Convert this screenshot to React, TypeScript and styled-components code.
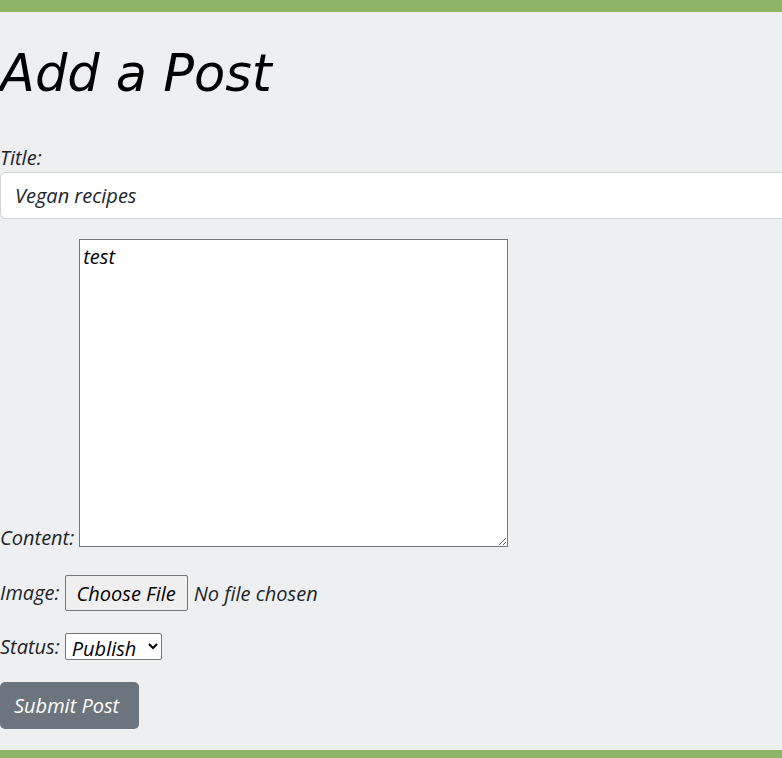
import React from "react";
import styled, { createGlobalStyle } from "styled-components";

const Global = createGlobalStyle`
  html, body { margin: 0; padding: 0; background: #eeeff1; }
  body { font-family: "Open Sans", "Lato", sans-serif; font-style: italic; color: #212529; }
  * { box-sizing: border-box; }
`;

const Bar = styled.div`
  height: 12px;
  background: #8db565;
`;

const BottomBar = styled.div`
  height: 8px;
  background: #8db565;
`;

const Main = styled.main`
  background: #eeeff1;
  padding: 34px 0 20px 0;
  height: 738px;
`;

const Heading = styled.h1`
  margin: 0 0 44px 0;
  font-family: "DejaVu Sans", sans-serif;
  font-style: oblique;
  font-weight: 400;
  font-size: 51px;
  line-height: 56px;
  color: #000;
`;

const Form = styled.form`
  display: flex;
  flex-direction: column;
  font-size: 20px;
`;

const Label = styled.label`
  display: block;
  font-size: 20px;
  line-height: 24px;
  margin-bottom: 2px;
`;

const TextInput = styled.input`
  display: block;
  width: 800px;
  height: 47px;
  padding: 0 14px;
  border: 1px solid #ced4da;
  border-radius: 6px;
  background: #fff;
  font: inherit;
  font-size: 20px;
  color: #212529;
  margin-bottom: 20px;
  outline: none;
`;

const InlineRow = styled.div<{ $bottom?: boolean; $mb: number }>`
  display: flex;
  align-items: ${(p) => (p.$bottom ? "flex-end" : "center")};
  gap: 5px;
  margin-bottom: ${(p) => p.$mb}px;
`;

const RowLabel = styled.label<{ $drop?: number }>`
  font-size: 20px;
  line-height: 24px;
  margin-bottom: ${(p) => -(p.$drop ?? 0)}px;
`;

const ContentArea = styled.textarea`
  width: 429px;
  height: 308px;
  border: 1px solid #767676;
  padding: 5px 3px;
  font: inherit;
  font-size: 20px;
  line-height: 24px;
  color: #000;
  background: #fff;
  resize: both;
  outline: none;
`;

const FileInput = styled.input`
  font: inherit;
  font-size: 20px;
  color: #212529;
  &::file-selector-button {
    font: inherit;
    font-style: italic;
    height: 36px;
    padding: 0 11px;
    margin-right: 6px;
    border: 1px solid #767676;
    border-radius: 2px;
    background: #efefef;
    color: #000;
  }
`;

const Select = styled.select`
  font: inherit;
  font-size: 20px;
  width: 97px;
  height: 27px;
  color: #000;
  background: #fff;
  border: 1px solid #767676;
  border-radius: 2px;
  padding: 0 2px 0 2px;
`;

const Submit = styled.button`
  align-self: flex-start;
  width: 139px;
  height: 47px;
  padding: 0 14px;
  text-align: left;
  background: #6c757d;
  color: #fff;
  border: none;
  border-radius: 5px;
  font: inherit;
  font-size: 20px;
`;

export default function App() {
  return (
    <>
      <Global />
      <Bar />
      <Main>
        <Heading>Add a Post</Heading>
        <Form onSubmit={(e) => e.preventDefault()}>
          <Label htmlFor="title">Title:</Label>
          <TextInput id="title" defaultValue="Vegan recipes" />
          <InlineRow $bottom $mb={28}>
            <RowLabel htmlFor="content" $drop={3}>
              Content:
            </RowLabel>
            <ContentArea id="content" defaultValue="test" />
          </InlineRow>
          <InlineRow $mb={22}>
            <RowLabel htmlFor="image">Image:</RowLabel>
            <FileInput id="image" type="file" />
          </InlineRow>
          <InlineRow $mb={22}>
            <RowLabel htmlFor="status">Status:</RowLabel>
            <Select id="status" defaultValue="publish">
              <option value="publish">Publish</option>
              <option value="draft">Draft</option>
            </Select>
          </InlineRow>
          <Submit type="submit">Submit Post</Submit>
        </Form>
      </Main>
      <BottomBar />
    </>
  );
}
